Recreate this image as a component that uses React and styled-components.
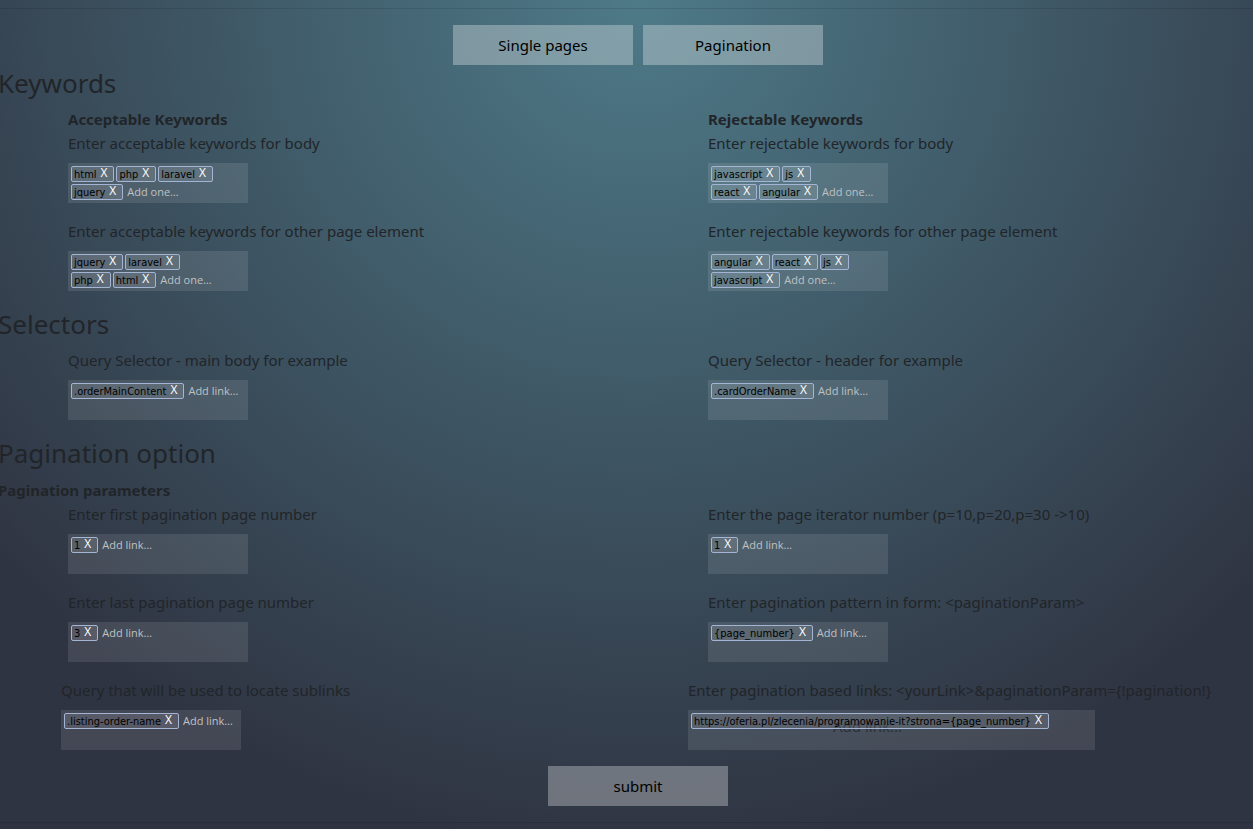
import React from "react";
import styled, { createGlobalStyle } from "styled-components";

const GlobalStyle = createGlobalStyle`
  *, *::before, *::after { box-sizing: border-box; }
  body {
    margin: 0;
    min-height: 100vh;
    overflow-x: hidden;
    background: #2f3442 radial-gradient(circle 850px at 51% 0, #4e7a88, #2f3442) no-repeat;
    color: #212529;
    font: 15px/24px "Noto Sans", "Open Sans", sans-serif;
  }
`;

/* The form bleeds past both window edges. */
const Page = styled.main`
  margin: 0 -25px 0 -2px;
  padding-top: 8px;
`;

const Rule = styled.hr`
  margin: 0;
  border: 0;
  border-top: 1px solid rgba(0, 0, 0, 0.1);
`;

const Toolbar = styled.div`
  display: flex;
  justify-content: center;
  gap: 10px;
  min-height: 57px;
  padding-top: 16px;
`;

const Footer = styled.div`
  display: flex;
  justify-content: center;
  padding-bottom: 16px;
`;

const Button = styled.button`
  width: 180px;
  height: 40px;
  padding: 0;
  border: 0;
  background: rgba(255, 255, 255, 0.3);
  color: #000;
  font: inherit;
  cursor: pointer;
`;

const SectionTitle = styled.h2`
  margin: 0 0 7px;
  font-size: 26px;
  font-weight: 400;
  line-height: 34px;
`;

const Subtitle = styled.h3`
  margin: 0;
  font-size: 15px;
  font-weight: 700;
  line-height: 24px;
`;

const PaginationHeader = styled.header`
  ${SectionTitle} { margin-bottom: 8px; }
`;

const Columns = styled.div`
  display: grid;
  grid-template-columns: 1fr 1fr;
`;

const Column = styled.div`
  min-width: 0;
  padding-left: ${(p) => p.$inset || 70}px;
`;

const FieldBlock = styled.div`
  margin-bottom: 16px;
`;

const FieldLabel = styled.label`
  display: block;
  margin-bottom: 8px;
  white-space: nowrap;
`;

const TagBox = styled.div`
  position: relative;
  display: flex;
  flex-direction: column;
  gap: 2px;
  width: ${(p) => (p.$wide ? 407 : 180)}px;
  height: 40px;
  padding: 3px;
  background: rgba(255, 255, 255, 0.1);
`;

const TagRow = styled.div`
  display: flex;
  gap: 2px;
  height: 16px;
`;

const TagItem = styled.span`
  display: flex;
  flex: none;
  height: 16px;
  padding: 0 6px 0 2px;
  border: 1px solid #a3b4d4;
  border-radius: 2px;
  background: rgba(255, 255, 255, 0.1);
  color: #000;
  font: 11px/15px "DejaVu Sans Condensed", "DejaVu Sans", sans-serif;
  white-space: nowrap;
`;

const Remove = styled.button`
  height: 12px;
  margin-left: 4px;
  padding: 0;
  border: 0;
  background: none;
  color: #fff;
  font: 12px/12px "Open Sans", sans-serif;
  cursor: pointer;
`;

const TagInput = styled.input`
  width: 60px;
  height: 16px;
  padding: 0 0 0 2px;
  border: 0;
  outline: 0;
  background: none;
  color: #ccc;
  font: 11px/16px "Open Sans", "Noto Sans", sans-serif;
  &::placeholder { color: #bfc1c3; opacity: 1; }
`;

/* Fills the whole box and sits below its tags. */
const BackInput = styled.input`
  position: absolute;
  inset: 0;
  width: 100%;
  padding: 0 48px 8px 0;
  border: 0;
  outline: 0;
  background: none;
  text-align: center;
  font: inherit;
  &::placeholder { color: #2b3038; opacity: 1; }
`;

const LiftedRow = styled(TagRow)`
  position: relative;
`;

function Tag({ text }) {
  return (
    <TagItem>
      {text}
      <Remove type="button" aria-label={`Remove ${text}`}>X</Remove>
    </TagItem>
  );
}

function Field({ id, label, rows, placeholder = "Add link…" }) {
  return (
    <FieldBlock>
      <FieldLabel htmlFor={id}>{label}</FieldLabel>
      <TagBox>
        {rows.map((row, i) => (
          <TagRow key={i}>
            {row.map((text) => <Tag key={text} text={text} />)}
            {i === rows.length - 1 && <TagInput id={id} placeholder={placeholder} />}
          </TagRow>
        ))}
      </TagBox>
    </FieldBlock>
  );
}

function WideField({ id, label, tag }) {
  return (
    <FieldBlock>
      <FieldLabel htmlFor={id}>{label}</FieldLabel>
      <TagBox $wide>
        <BackInput id={id} placeholder="Add link..." />
        <LiftedRow><Tag text={tag} /></LiftedRow>
      </TagBox>
    </FieldBlock>
  );
}

export default function App() {
  return (
    <>
      <GlobalStyle />
      <Page>
        <Rule />
        <Toolbar>
          <Button type="button">Single pages</Button>
          <Button type="button">Pagination</Button>
        </Toolbar>

        <SectionTitle>Keywords</SectionTitle>
        <Columns>
          <Column>
            <Subtitle>Acceptable Keywords</Subtitle>
            <Field id="accept-body" label="Enter acceptable keywords for body" placeholder="Add one…"
              rows={[["html", "php", "laravel"], ["jquery"]]} />
            <Field id="accept-other" label="Enter acceptable keywords for other page element" placeholder="Add one…"
              rows={[["jquery", "laravel"], ["php", "html"]]} />
          </Column>
          <Column>
            <Subtitle>Rejectable Keywords</Subtitle>
            <Field id="reject-body" label="Enter rejectable keywords for body" placeholder="Add one…"
              rows={[["javascript", "js"], ["react", "angular"]]} />
            <Field id="reject-other" label="Enter rejectable keywords for other page element" placeholder="Add one…"
              rows={[["angular", "react", "js"], ["javascript"]]} />
          </Column>
        </Columns>

        <SectionTitle>Selectors</SectionTitle>
        <Columns>
          <Column>
            <Field id="selector-body" label="Query Selector - main body for example" rows={[[".orderMainContent"]]} />
          </Column>
          <Column>
            <Field id="selector-header" label="Query Selector - header for example" rows={[[".cardOrderName"]]} />
          </Column>
        </Columns>

        <PaginationHeader>
          <SectionTitle>Pagination option</SectionTitle>
          <Subtitle>Pagination parameters</Subtitle>
        </PaginationHeader>
        <Columns>
          <Column>
            <Field id="first-page" label="Enter first pagination page number" rows={[["1"]]} />
            <Field id="last-page" label="Enter last pagination page number" rows={[["3"]]} />
          </Column>
          <Column>
            <Field id="iterator" label="Enter the page iterator number (p=10,p=20,p=30 ->10)" rows={[["1"]]} />
            <Field id="pattern" label="Enter pagination pattern in form: <paginationParam>" rows={[["{page_number}"]]} />
          </Column>
        </Columns>
        <Columns>
          <Column $inset={63}>
            <Field id="sublinks" label="Query that will be used to locate sublinks" rows={[[".listing-order-name"]]} />
          </Column>
          <Column $inset={50}>
            <WideField id="links" label="Enter pagination based links: <yourLink>&paginationParam={!pagination!}"
              tag="https://oferia.pl/zlecenia/programowanie-it?strona={page_number}" />
          </Column>
        </Columns>

        <Footer>
          <Button type="submit">submit</Button>
        </Footer>
        <Rule />
      </Page>
    </>
  );
}
